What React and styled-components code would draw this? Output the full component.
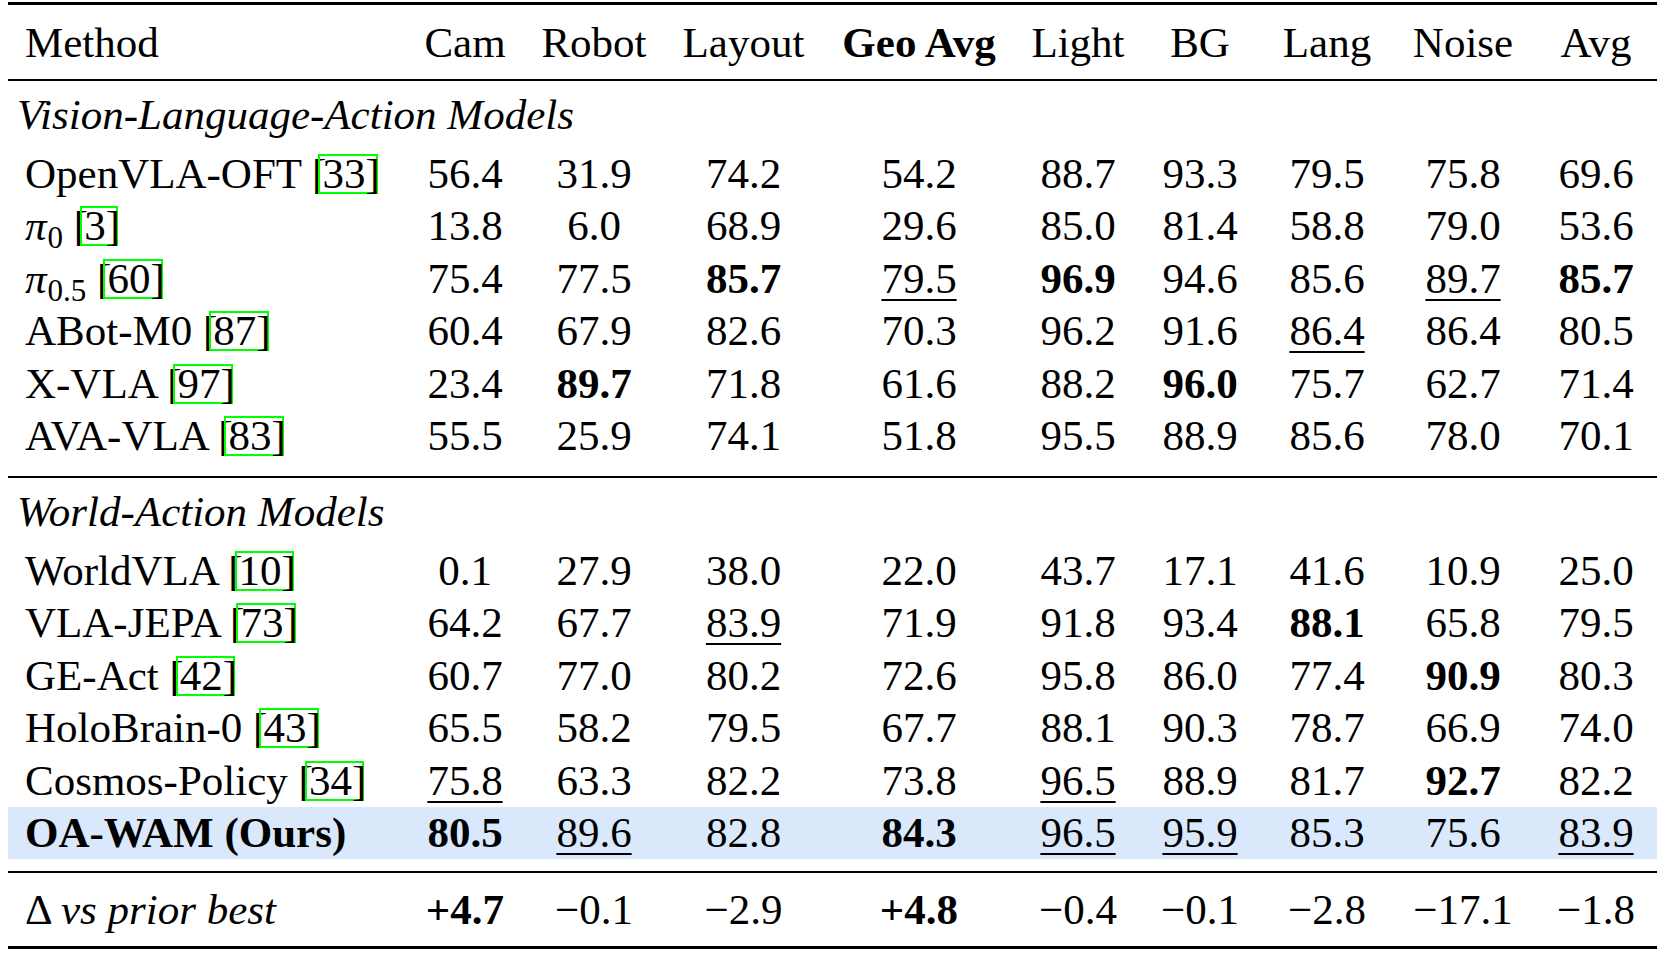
import React from 'react';
import styled, { createGlobalStyle } from 'styled-components';

const GlobalStyle = createGlobalStyle`
  html, body {
    margin: 0;
    padding: 0;
    background: #fff;
  }
  body {
    font-family: "Liberation Serif", "Times New Roman", serif;
    color: #000;
  }
`;

const COLUMNS = '402px 110px 148px 151px 200px 118px 126px 128px 144px 122px';

const Sheet = styled.div`
  width: 1649px;
  margin: 2px 0 0 8px;
  font-size: 43px;
`;

const Rule = styled.div`
  height: ${(p) => p.$weight}px;
  margin-top: ${(p) => p.$gap || 0}px;
  background: #000;
`;

const Row = styled.div`
  display: grid;
  grid-template-columns: ${COLUMNS};
  align-items: center;
  height: ${(p) => p.$height || 52.5}px;
  background: ${(p) => (p.$highlight ? '#d9e9fb' : 'transparent')};
`;

const MethodCell = styled.div`
  padding-left: 17px;
  white-space: nowrap;
  font-weight: ${(p) => (p.$bold ? 700 : 400)};
`;

const NumCell = styled.div`
  text-align: center;
  white-space: nowrap;
`;

const Value = styled.span`
  font-weight: ${(p) => (p.$bold ? 700 : 400)};
  text-decoration: ${(p) => (p.$under ? 'underline' : 'none')};
  text-decoration-thickness: 1.6px;
  text-underline-offset: 6px;
  text-decoration-skip-ink: none;
`;

const GroupLabel = styled.div`
  height: 66px;
  display: flex;
  align-items: center;
  padding-left: 9px;
  font-style: italic;
`;

const Italic = styled.span`
  font-style: italic;
`;

const Sub = styled.sub`
  font-size: 31px;
  line-height: 0;
  vertical-align: -8px;
  margin-left: 1px;
`;

const CiteBox = styled.span`
  display: inline-block;
  line-height: 36px;
  border: 2.5px solid #00ff00;
  margin-left: -8px;
  padding-left: 2px;
`;

const Close = styled.span`
  margin-right: -4px;
`;

const Cite = ({ n }) => (
  <>
    {' ['}
    <CiteBox>
      {n}
      <Close>]</Close>
    </CiteBox>
  </>
);

const Pi = ({ sub }) => (
  <>
    <Italic>π</Italic>
    <Sub>{sub}</Sub>
  </>
);

const HEADERS = ['Cam', 'Robot', 'Layout', 'Geo Avg', 'Light', 'BG', 'Lang', 'Noise', 'Avg'];

// '*' marks bold (best), '_' marks underlined (second best)
const VLA = [
  { name: 'OpenVLA-OFT', cite: 33, vals: ['56.4', '31.9', '74.2', '54.2', '88.7', '93.3', '79.5', '75.8', '69.6'] },
  { name: <Pi sub="0" />, cite: 3, vals: ['13.8', '6.0', '68.9', '29.6', '85.0', '81.4', '58.8', '79.0', '53.6'] },
  { name: <Pi sub="0.5" />, cite: 60, vals: ['75.4', '77.5', '*85.7', '_79.5', '*96.9', '94.6', '85.6', '_89.7', '*85.7'] },
  { name: 'ABot-M0', cite: 87, vals: ['60.4', '67.9', '82.6', '70.3', '96.2', '91.6', '_86.4', '86.4', '80.5'] },
  { name: 'X-VLA', cite: 97, vals: ['23.4', '*89.7', '71.8', '61.6', '88.2', '*96.0', '75.7', '62.7', '71.4'] },
  { name: 'AVA-VLA', cite: 83, vals: ['55.5', '25.9', '74.1', '51.8', '95.5', '88.9', '85.6', '78.0', '70.1'] },
];

const WAM = [
  { name: 'WorldVLA', cite: 10, vals: ['0.1', '27.9', '38.0', '22.0', '43.7', '17.1', '41.6', '10.9', '25.0'] },
  { name: 'VLA-JEPA', cite: 73, vals: ['64.2', '67.7', '_83.9', '71.9', '91.8', '93.4', '*88.1', '65.8', '79.5'] },
  { name: 'GE-Act', cite: 42, vals: ['60.7', '77.0', '80.2', '72.6', '95.8', '86.0', '77.4', '*90.9', '80.3'] },
  { name: 'HoloBrain-0', cite: 43, vals: ['65.5', '58.2', '79.5', '67.7', '88.1', '90.3', '78.7', '66.9', '74.0'] },
  { name: 'Cosmos-Policy', cite: 34, vals: ['_75.8', '63.3', '82.2', '73.8', '_96.5', '88.9', '81.7', '*92.7', '82.2'] },
  { name: 'OA-WAM (Ours)', ours: true, vals: ['*80.5', '_89.6', '82.8', '*84.3', '_96.5', '_95.9', '85.3', '75.6', '_83.9'] },
];

const DELTA = ['*+4.7', '−0.1', '−2.9', '*+4.8', '−0.4', '−0.1', '−2.8', '−17.1', '−1.8'];

const Cell = ({ raw }) => {
  const bold = raw.startsWith('*');
  const under = raw.startsWith('_');
  const text = bold || under ? raw.slice(1) : raw;
  return (
    <NumCell>
      <Value $bold={bold} $under={under}>{text}</Value>
    </NumCell>
  );
};

const MethodRow = ({ row }) => (
  <Row $highlight={row.ours}>
    <MethodCell $bold={row.ours}>
      {row.name}
      {row.cite && <Cite n={row.cite} />}
    </MethodCell>
    {row.vals.map((v, i) => (
      <Cell key={i} raw={v} />
    ))}
  </Row>
);

const App = () => {
  return (
    <>
      <GlobalStyle />
      <Sheet>
        <Rule $weight={3} />
        <Row $height={74}>
          <MethodCell>Method</MethodCell>
          {HEADERS.map((h) => (
            <NumCell key={h}>
              <Value $bold={h === 'Geo Avg'}>{h}</Value>
            </NumCell>
          ))}
        </Row>
        <Rule $weight={2} />

        <GroupLabel>Vision-Language-Action Models</GroupLabel>
        {VLA.map((r, i) => (
          <MethodRow key={i} row={r} />
        ))}
        <Rule $weight={2} $gap={14} />

        <GroupLabel>World-Action Models</GroupLabel>
        {WAM.map((r, i) => (
          <MethodRow key={i} row={r} />
        ))}
        <Rule $weight={2} $gap={12} />

        <Row $height={73}>
          <MethodCell>
            Δ <Italic>vs prior best</Italic>
          </MethodCell>
          {DELTA.map((v, i) => (
            <Cell key={i} raw={v} />
          ))}
        </Row>
        <Rule $weight={3} />
      </Sheet>
    </>
  );
};

export default App;
